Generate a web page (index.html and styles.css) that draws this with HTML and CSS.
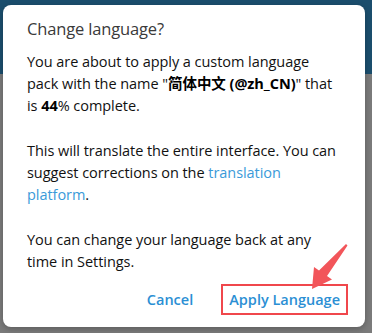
FILE: index.html
```html
<!DOCTYPE html>
<html lang="en">
<head>
    <meta charset="UTF-8">
    <meta name="viewport" content="width=device-width, initial-scale=1.0">
    <title>Change language?</title>
    <link rel="stylesheet" href="styles.css">
</head>
<body>
    <div class="backdrop">
        <div class="dialog">
            <h2 class="dialog-title">Change language?</h2>
            <p>You are about to apply a custom language pack with the name "<b>简体中文 (@zh_CN)</b>" that is <b>44</b>% complete.</p>
            <p>This will translate the entire interface. You can suggest corrections on the <a href="#">translation platform</a>.</p>
            <p>You can change your language back at any time in Settings.</p>
            <div class="dialog-buttons">
                <button class="btn">Cancel</button>
                <button class="btn btn-marked">Apply Language</button>
            </div>
        </div>
        <svg class="arrow" width="60" height="60" viewBox="0 0 60 60">
            <path d="M46 9 L47.5 10.5 L27 41 L32 44.5 L12 54 L14 32 L19 35.5 Z" fill="#f2555a"/>
        </svg>
    </div>
</body>
</html>
```

FILE: styles.css
```css
* {
    margin: 0;
    padding: 0;
    box-sizing: border-box;
}

body {
    font-family: "Open Sans", "Noto Sans CJK SC", sans-serif;
    width: 372px;
    height: 333px;
    overflow: hidden;
}

.backdrop {
    position: relative;
    height: 333px;
    padding: 5px 0 0 3px;
    background: linear-gradient(#1b4e6d 0 74px, #7b7b7b 74px);
}

.dialog {
    width: 362px;
    background: #fff;
    border-radius: 8px;
    padding: 12px 17px 12px 24px;
    box-shadow: 0 2px 6px rgba(0,0,0,0.25);
}

.dialog-title {
    font-size: 16.5px;
    font-weight: 400;
    line-height: 24px;
    letter-spacing: -0.15px;
    color: #3a3a3a;
    margin-bottom: 10px;
}

.dialog p {
    font-size: 14.5px;
    line-height: 22px;
    letter-spacing: -0.05px;
    color: #111;
    padding-right: 6.5px;
    margin-bottom: 23px;
}

.dialog p:last-of-type {
    margin-bottom: 11px;
}

.dialog p b {
    font-weight: 700;
    color: #000;
}

.dialog a {
    color: #3a9ad9;
    text-decoration: none;
}

.dialog-buttons {
    display: flex;
    justify-content: flex-end;
    gap: 20px;
}

.btn {
    font-family: inherit;
    font-size: 14.5px;
    font-weight: 600;
    color: #2b8fd4;
    background: none;
    border: 2px solid transparent;
    height: 31px;
    padding: 0 6px;
    cursor: pointer;
}

.btn-marked {
    border-color: #f0474c;
}

.arrow {
    position: absolute;
    left: 300px;
    top: 235px;
}
```
